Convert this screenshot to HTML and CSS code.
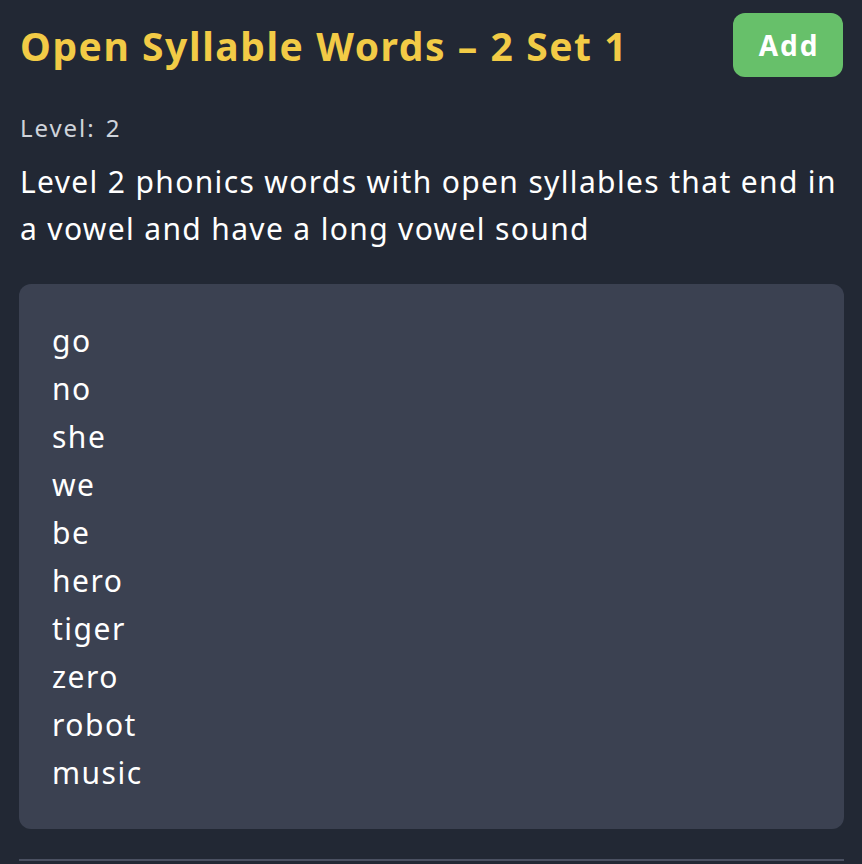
FILE: index.html
```html
<!DOCTYPE html>
<html lang="en">
<head>
<meta charset="utf-8">
<title>Open Syllable Words</title>
<link rel="stylesheet" href="styles.css">
</head>
<body>
<section class="set">
  <div class="set-header">
    <h1 class="set-title">Open Syllable Words – 2 Set 1</h1>
    <button class="add-btn">Add</button>
  </div>
  <p class="set-level">Level: 2</p>
  <p class="set-desc">Level 2 phonics words with open syllables that end in a vowel and have a long vowel sound</p>
  <ul class="word-card">
    <li>go</li>
    <li>no</li>
    <li>she</li>
    <li>we</li>
    <li>be</li>
    <li>hero</li>
    <li>tiger</li>
    <li>zero</li>
    <li>robot</li>
    <li>music</li>
  </ul>
</section>
</body>
</html>
```
FILE: styles.css
```css
html, body {
  margin: 0;
  padding: 0;
  background: #222834;
}
body {
  font-family: "Noto Sans", "Open Sans", sans-serif;
  color: #ffffff;
}
.set {
  margin: 0 18px 0 19px;
  padding-top: 13px;
  padding-bottom: 30px;
  border-bottom: 2px solid #4a5061;
}
.set-header {
  display: flex;
  justify-content: space-between;
  align-items: center;
  height: 64px;
}
.set-title {
  margin: 0 0 0 1px;
  font-size: 39px;
  font-weight: 700;
  color: #f2cb46;
  letter-spacing: 0.04em;
  white-space: nowrap;
}
.add-btn {
  width: 110px;
  height: 64px;
  border: none;
  border-radius: 12px;
  background: #67c06a;
  color: #ffffff;
  font-family: inherit;
  font-size: 28px;
  font-weight: 700;
  letter-spacing: 0.07em;
  padding: 0 0 0 2px;
  margin-right: 1px;
}
.set-level {
  margin: 35px 0 0 1px;
  font-size: 24px;
  line-height: 32px;
  color: #cfd3da;
  letter-spacing: 0.08em;
  word-spacing: 2px;
}
.set-desc {
  margin: 14px 0 0 1px;
  font-size: 30px;
  line-height: 47px;
  letter-spacing: 0.045em;
}
.word-card {
  list-style: none;
  margin: 32px 0 0 0;
  padding: 33px 32px 32px 33px;
  background: #3b4151;
  border-radius: 12px;
  font-size: 30px;
  line-height: 48px;
  letter-spacing: 0.05em;
}
```
